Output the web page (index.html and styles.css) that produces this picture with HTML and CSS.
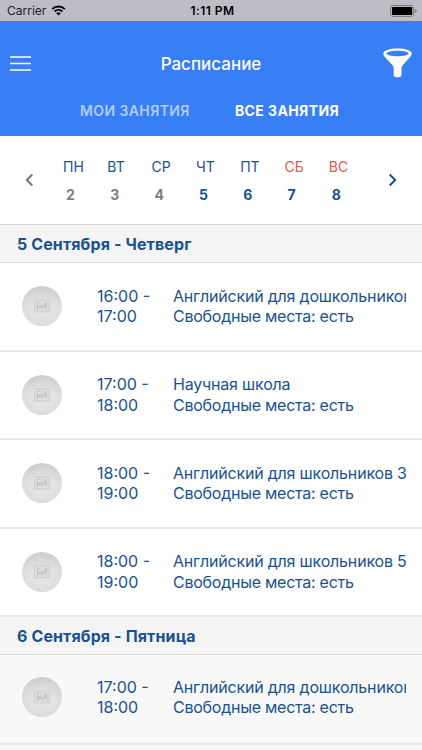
FILE: index.html
```html
<!DOCTYPE html>
<html lang="ru">
<head>
    <meta charset="UTF-8">
    <meta name="viewport" content="width=device-width, initial-scale=1.0">
    <title>Расписание</title>
    <link rel="stylesheet" href="styles.css">
</head>
<body>
    <svg class="sprite" width="0" height="0">
        <symbol id="photo" viewBox="0 0 16 14">
            <rect x="0.6" y="0.9" width="14.8" height="12" fill="#dcdcdc" stroke="#cecece" stroke-width="1.1"/>
            <path d="M3 3h3.500v3l2 1.500L12 3h1v8l-2-3.500L8.500 10 6 8.500 3 11z" fill="#c6c6c6"/>
            <circle cx="5.500" cy="5.300" r="1.300" fill="#e4e4e4"/>
        </symbol>
    </svg>

    <div class="status">
        <div class="carrier">
            <span>Carrier</span>
            <svg width="15" height="11" viewBox="0 0 15 11">
                <path d="M1.200 4.100a9 9 0 0 1 12.600 0M3.600 6.500a5.500 5.500 0 0 1 7.800 0" fill="none" stroke="#000" stroke-width="1.900"/>
                <path d="M7.500 10.500L5.200 8.300a3.300 3.300 0 0 1 4.600 0z"/>
            </svg>
        </div>
        <span class="clock">1:11 PM</span>
        <svg class="battery" width="27" height="12" viewBox="0 0 27 12">
            <rect x="0.600" y="0.600" width="23" height="10.800" rx="2.500" fill="none" stroke="#77777c"/>
            <rect x="2" y="2" width="20.200" height="8" rx="1" />
            <path d="M25 4v4q1.500-.6 1.500-2T25 4z" fill="#77777c"/>
        </svg>
    </div>

    <header class="header">
        <div class="toolbar">
            <svg class="menu" width="21" height="15" viewBox="0 0 21 15">
                <path d="M0 1h21M0 7.500h21M0 14h21" stroke="#fff" stroke-width="1.700"/>
            </svg>
            <h1>Расписание</h1>
            <svg class="filter" width="29" height="30" viewBox="0 0 29 30">
                <path fill="#fff" fill-rule="evenodd" d="M14.500 0.500C6.500 0.500 0.300 2.600 0.300 5.600C0.300 7.500 1.600 8.800 3 10.200L9.500 17.200Q10.700 18.600 10.700 20V27Q10.700 29.300 14.500 29.300T18.500 27V20Q18.500 18.600 19.700 17.200L26 10.200C27.400 8.800 28.700 7.500 28.700 5.600C28.700 2.600 22.500 0.500 14.500 0.500ZM14.500 2.700C20.500 2.700 25.700 3.900 25.700 5.500S20.500 8.300 14.500 8.300S3.300 7.100 3.300 5.500S8.500 2.700 14.500 2.700Z"/>
            </svg>
        </div>
        <nav class="tabs">
            <span class="tab">МОИ ЗАНЯТИЯ</span>
            <span class="tab active">ВСЕ ЗАНЯТИЯ</span>
        </nav>
    </header>

    <section class="week">
        <svg class="arrow prev" width="9" height="14" viewBox="0 0 9 14">
            <path d="M7.300 1.500L1.800 7l5.500 5.500"/>
        </svg>
        <div class="days">
            <div class="day past"><span>ПН</span><b>2</b></div>
            <div class="day past"><span>ВТ</span><b>3</b></div>
            <div class="day past"><span>СР</span><b>4</b></div>
            <div class="day"><span>ЧТ</span><b>5</b></div>
            <div class="day"><span>ПТ</span><b>6</b></div>
            <div class="day weekend"><span>СБ</span><b>7</b></div>
            <div class="day weekend"><span>ВС</span><b>8</b></div>
        </div>
        <svg class="arrow next" width="9" height="14" viewBox="0 0 9 14">
            <path d="M1.700 1.500L7.200 7l-5.500 5.500"/>
        </svg>
    </section>

    <main>
        <h2>5 Сентября - Четверг</h2>
        <div class="lesson">
            <div class="avatar"><svg width="16" height="14"><use href="#photo"/></svg></div>
            <div class="time">16:00 -<br>17:00</div>
            <div class="info"><div class="name">Английский для дошкольников</div>Свободные места: есть</div>
        </div>
        <div class="lesson">
            <div class="avatar"><svg width="16" height="14"><use href="#photo"/></svg></div>
            <div class="time">17:00 -<br>18:00</div>
            <div class="info"><div class="name">Научная школа</div>Свободные места: есть</div>
        </div>
        <div class="lesson">
            <div class="avatar"><svg width="16" height="14"><use href="#photo"/></svg></div>
            <div class="time">18:00 -<br>19:00</div>
            <div class="info"><div class="name">Английский для школьников 3</div>Свободные места: есть</div>
        </div>
        <div class="lesson">
            <div class="avatar"><svg width="16" height="14"><use href="#photo"/></svg></div>
            <div class="time">18:00 -<br>19:00</div>
            <div class="info"><div class="name">Английский для школьников 5</div>Свободные места: есть</div>
        </div>
        <h2>6 Сентября - Пятница</h2>
        <div class="lesson shaded">
            <div class="avatar"><svg width="16" height="14"><use href="#photo"/></svg></div>
            <div class="time">17:00 -<br>18:00</div>
            <div class="info"><div class="name">Английский для дошкольников</div>Свободные места: есть</div>
        </div>
    </main>
</body>
</html>
```
FILE: styles.css
```css
* { box-sizing: border-box; }
body { margin: 0; height: 750px; overflow: hidden; background: #f8f8f8; color: #19528f; font-family: Inter, sans-serif; }
svg { display: block; flex: none; }
.sprite { position: absolute; }

.status { height: 21px; padding: 0 5px 0 7px; background: #bebdc5; color: #000; display: grid; grid-template-columns: 1fr auto 1fr; align-items: center; font-size: 12px; }
.carrier { display: flex; align-items: center; gap: 5px; color: #222; }
.clock { padding-left: 1px; font-weight: 600; letter-spacing: 0.45px; }
.battery { justify-self: end; }

.header { height: 115px; background: #387ef5; color: #fff; }
.toolbar { height: 68px; padding: 16px 10px 0 10px; display: grid; grid-template-columns: 1fr auto 1fr; align-items: center; }
.toolbar h1 { margin: 0; padding-top: 2px; font-size: 17px; font-weight: 500; }
.filter { justify-self: end; }
.tabs { display: flex; padding: 13px 0 0 80px; gap: 45px; font-size: 14px; line-height: 18px; font-weight: 600; letter-spacing: 0.4px; }
.tab { color: #b0cdfc; white-space: nowrap; }
.tab.active { color: #fff; font-weight: 700; }

.week { height: 89px; padding: 0 25px; background: #fff; display: flex; align-items: center; border-bottom: 1px solid #d6d6d6; }
.arrow { fill: none; stroke: #19528f; stroke-width: 2; }
.prev { stroke: #777; }
.days { flex: 1; margin-left: 29px; padding-top: 2px; display: grid; grid-template-columns: repeat(7, 44.3px); }
.day { display: flex; flex-direction: column; gap: 8px; font-size: 14px; line-height: 20px; }
.day b { padding-left: 3px; font-weight: 700; }
.past b { color: #808080; }
.weekend span { color: #e2574c; }

h2 { margin: 0; height: 38px; padding-left: 17px; background: #f4f4f4; border-bottom: 1px solid #dcdcdc; font-size: 16px; font-weight: 700; letter-spacing: 0.12px; line-height: 39px; }
.lesson { height: 88.500px; padding: 0 16px 0 22px; background: #fff; border-bottom: 2px solid #e7e7e7; display: flex; align-items: center; font-size: 16px; line-height: 20.300px; }
.shaded { height: 90px; padding-bottom: 4px; background: #f8f8f8; }
.avatar { width: 40px; height: 40px; margin-right: 35px; border-radius: 50%; background: radial-gradient(ellipse 70% 50% at 50% 62%, #e8e8e8, #dfdfdf 60%, #cbcbcb 130%); display: flex; align-items: center; justify-content: center; flex: none; }
.time { width: 76px; flex: none; }
/* long course names are clipped at the right padding */
.info { flex: 1; overflow: hidden; white-space: nowrap; letter-spacing: -0.25px; }
.name { letter-spacing: -0.19px; }
```
